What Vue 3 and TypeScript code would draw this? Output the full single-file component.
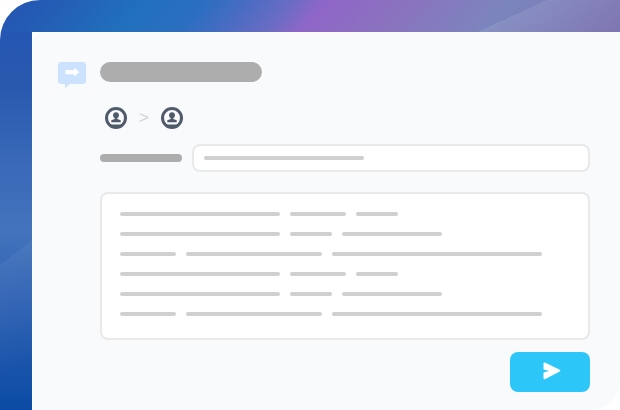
<script setup lang="ts">
const lines: number[][] = [
  [160, 56, 42],
  [160, 42, 100],
  [56, 136, 210],
  [160, 56, 42],
  [160, 42, 100],
  [56, 136, 210],
]
const people = ['a', 'b']
</script>

<template>
  <div class="frame">
    <main class="card">
      <svg class="bubble" width="28" height="26" viewBox="0 0 28 26" aria-hidden="true">
        <path d="M3 0h22a3 3 0 0 1 3 3v16a3 3 0 0 1-3 3H12l-5 4v-4H3a3 3 0 0 1-3-3V3a3 3 0 0 1 3-3z" fill="#cde2ff" />
        <path d="M7.300 8.100H16V5.800l5.400 4.400L16 14.600v-2.300H7.300z" fill="#fff" />
      </svg>
      <div class="content">
        <div class="title"></div>
        <div class="route">
          <template v-for="(p, i) in people" :key="p">
            <span v-if="i > 0" class="chev">&gt;</span>
            <svg width="22" height="22" viewBox="0 0 22 22" aria-hidden="true">
              <circle cx="11" cy="11" r="9.500" fill="#f9fafc" stroke="#4f5a6b" stroke-width="3" />
              <path d="M3.500 17.500h15a9.500 9.500 0 0 1-15 0z" fill="#4f5a6b" />
              <circle cx="11" cy="8.200" r="2.900" fill="#4f5a6b" />
              <path d="M9.700 10.500h2.600v1.400l3.400 1.300v2.100H6.300v-2.100l3.400-1.300z" fill="#4f5a6b" />
            </svg>
          </template>
        </div>
        <div class="field">
          <div class="label"></div>
          <div class="input"><div class="value"></div></div>
        </div>
        <div class="box">
          <div v-for="(row, r) in lines" :key="r" class="row">
            <i v-for="(w, c) in row" :key="c" class="dash" :style="{ width: w + 'px' }"></i>
          </div>
        </div>
        <div class="actions">
          <button class="send" type="button" aria-label="Send">
            <svg width="22" height="20" viewBox="0 0 22 20" aria-hidden="true">
              <path d="M5.500 1.500L20.300 8.700L5.500 16.300V11.300L14 8.900L5.500 6.700z" fill="#fff" stroke="#fff" stroke-width="2" stroke-linejoin="round" />
            </svg>
          </button>
        </div>
      </div>
    </main>
  </div>
</template>

<style scoped>
.frame {
  width: 620px;
  height: 410px;
  box-sizing: border-box;
  padding: 32px 0 0 32px;
  display: flex;
  overflow: hidden;
  border-radius: 40px 0 30px 0;
  background-repeat: no-repeat;
  background-image:
    linear-gradient(155deg, rgba(255, 255, 255, 0) 231px, rgba(255, 255, 255, 0.09) 231px, rgba(255, 255, 255, 0.03) 293px),
    linear-gradient(142deg, rgba(255, 255, 255, 0) 209px, rgba(255, 255, 255, 0.05) 209px, rgba(255, 255, 255, 0) 300px),
    linear-gradient(130deg, #2556b2 10px, #2360b6 56px, #2170bd 110px, #2a6ec0 156px, #4c6cc2 194px, #6b6cc4 225px, #8f66c8 250px, #8b72bf 309px, #7b85bd 393px, #7a72b0 485px),
    linear-gradient(180deg, #2556b2 32px, #2a5aaf 90px, #3a6ab8 170px, #4373bc 230px, #2f62b3 300px, #0b4ba5 410px);
  background-size: 620px 32px, 32px 410px, 620px 32px, 32px 410px;
  background-position: 0 0;
}
.card {
  flex: 1;
  display: flex;
  align-items: flex-start;
  gap: 14px;
  box-sizing: border-box;
  padding: 30px 30px 0 26px;
  background: #f9fafc;
  border-radius: 12px 0 30px 0;
}
.bubble {
  flex: none;
}
.content {
  flex: 1;
  display: flex;
  flex-direction: column;
}
.title {
  width: 162px;
  height: 20px;
  border-radius: 10px;
  background: #adadad;
}
.route {
  display: flex;
  align-items: center;
  height: 22px;
  margin-top: 25px;
  padding-left: 5px;
}
.chev {
  width: 34px;
  text-align: center;
  font: 17px/22px "Liberation Sans", sans-serif;
  color: #d0d3d8;
}
.field {
  display: flex;
  align-items: center;
  gap: 10px;
  margin-top: 15px;
}
.label {
  width: 82px;
  height: 8px;
  border-radius: 4px;
  background: #adadad;
}
.input {
  flex: 1;
  height: 28px;
  box-sizing: border-box;
  display: flex;
  align-items: center;
  padding-left: 10px;
  background: #fff;
  border: 2px solid #e9e9e9;
  border-radius: 8px;
}
.value {
  width: 160px;
  height: 4px;
  border-radius: 2px;
  background: #d0d0d0;
}
.box {
  display: flex;
  flex-direction: column;
  gap: 16px;
  margin-top: 20px;
  box-sizing: border-box;
  height: 148px;
  padding: 18px 18px 0;
  background: #fff;
  border: 2px solid #e9e9e9;
  border-radius: 8px;
}
.row {
  display: flex;
  gap: 10px;
}
.dash {
  display: block;
  height: 4px;
  border-radius: 2px;
  background: #d0d0d0;
}
.actions {
  display: flex;
  justify-content: flex-end;
  margin-top: 12px;
}
.send {
  width: 80px;
  height: 40px;
  display: flex;
  align-items: center;
  justify-content: center;
  padding: 0;
  border: 0;
  border-radius: 8px;
  background: #2dc6f8;
}
</style>

<style>
html,
body {
  margin: 0;
  background: #fff;
}
</style>
